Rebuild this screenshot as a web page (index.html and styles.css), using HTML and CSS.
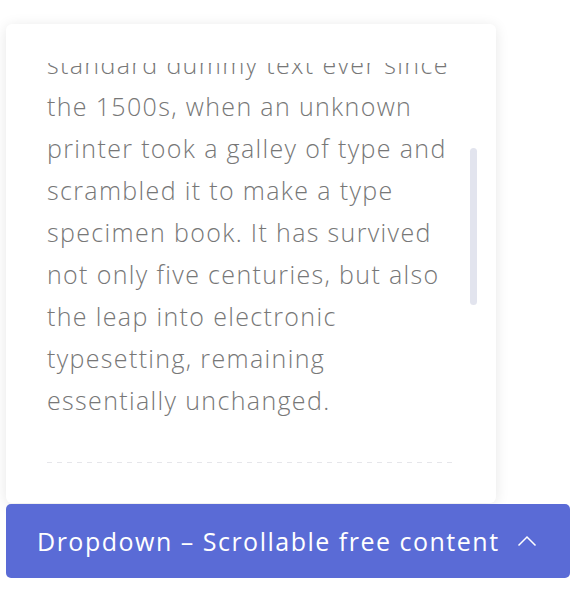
FILE: index.html
```html
<!DOCTYPE html>
<html>
<head>
<meta charset="utf-8">
<link rel="stylesheet" href="styles.css">
</head>
<body>
<div class="wrap">
  <div class="card">
    <div class="scroll">
      <div class="content">
        <p class="text">
          <span class="line">Lorem Ipsum is simply dummy text</span>
          <span class="line">of the printing and typesetting</span>
          <span class="line">industry. Lorem Ipsum has been</span>
          <span class="line">the industry's</span>
          <span class="line">standard dummy text ever since</span>
          <span class="line">the 1500s, when an unknown</span>
          <span class="line">printer took a galley of type and</span>
          <span class="line">scrambled it to make a type</span>
          <span class="line">specimen book. It has survived</span>
          <span class="line">not only five centuries, but also</span>
          <span class="line">the leap into electronic</span>
          <span class="line">typesetting, remaining</span>
          <span class="line">essentially unchanged.</span>
        </p>
        <div class="divider"></div>
      </div>
      <div class="thumb"></div>
    </div>
  </div>
  <button class="toggle">
    <span class="label">Dropdown – Scrollable free content</span>
    <svg class="chev" width="20" height="12" viewBox="0 0 20 12"><path d="M1.5 10.5 L10 2 L18.5 10.5" fill="none" stroke="#fff" stroke-width="1.5"/></svg>
  </button>
</div>
</body>
</html>
```

FILE: styles.css
```css
html, body {
  margin: 0;
  padding: 0;
  background: #fff;
}
.wrap {
  padding: 24px 0 0 6px;
  width: 564px;
}
.card {
  width: 490px;
  height: 479px;
  background: #fff;
  border-radius: 6px;
  box-shadow: 0 2px 14px rgba(0,0,0,0.10);
  padding-top: 39px;
  box-sizing: border-box;
}
.scroll {
  position: relative;
  height: 440px;
  overflow: hidden;
  padding-left: 41px;
  padding-right: 20px;
}
.content {
  margin-top: -188px;
}
.text {
  margin: 0;
  font-family: "Open Sans", sans-serif;
  font-weight: 300;
  font-size: 25px;
  letter-spacing: 1.35px;
  line-height: 42px;
  color: #777;
}
.line {
  display: block;
  white-space: nowrap;
}
.divider {
  margin-top: 41px;
  height: 1px;
  width: 406px;
  background: linear-gradient(90deg, #e6e6ea 0 5px, transparent 5px 10px) repeat-x;
  background-size: 10px 1px;
}
.thumb {
  position: absolute;
  left: 464px;
  top: 85px;
  width: 7px;
  height: 157px;
  border-radius: 4px;
  background: #e2e4ee;
}
.toggle {
  display: flex;
  align-items: center;
  justify-content: space-between;
  width: 564px;
  height: 74px;
  margin-top: 1px;
  padding: 0 33px 0 31px;
  box-sizing: border-box;
  border: none;
  border-radius: 5px;
  background: #5a6bd6;
  color: #fff;
  font-family: "Open Sans", sans-serif;
  font-size: 25px;
  font-weight: 400;
  letter-spacing: 1.5px;
}
.chev {
  display: block;
}
```
